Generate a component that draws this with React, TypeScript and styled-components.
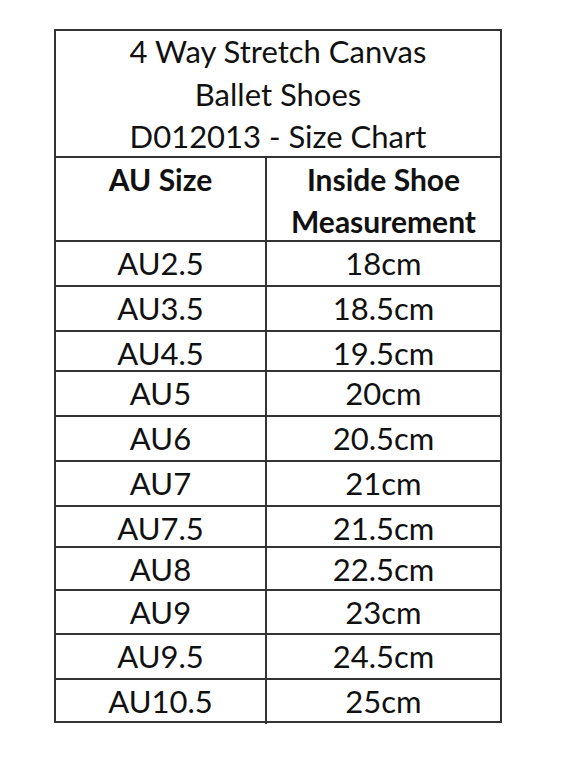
import React from 'react';
import styled, { createGlobalStyle } from 'styled-components';

const GlobalStyle = createGlobalStyle`
  html, body {
    margin: 0;
    padding: 0;
    background: #ffffff;
  }
  body {
    font-family: Lato, "Open Sans", "Liberation Sans", sans-serif;
    color: #111;
  }
`;

const Page = styled.div`
  padding: 29px 0 0 54px;
  min-height: 776px;
  box-sizing: border-box;
`;

const Chart = styled.div`
  width: 448px;
  border: 2px solid #333;
  box-sizing: border-box;
`;

const Title = styled.div`
  height: 125px;
  display: flex;
  flex-direction: column;
  justify-content: center;
  align-items: center;
  font-size: 31px;
  line-height: 42.5px;
  padding-top: 1px;
  box-sizing: border-box;
`;

const Row = styled.div<{ h: number }>`
  display: grid;
  grid-template-columns: 211px 1fr;
  height: ${({ h }) => h}px;
  border-top: 2px solid #333;
  box-sizing: border-box;
`;

const Cell = styled.div<{ bold?: boolean; top?: boolean }>`
  display: flex;
  flex-direction: column;
  align-items: center;
  justify-content: ${({ top }) => (top ? 'flex-start' : 'center')};
  font-size: ${({ bold }) => (bold ? 30 : 31)}px;
  line-height: 42px;
  font-weight: ${({ bold }) => (bold ? 700 : 400)};
  text-align: center;
  padding-bottom: 2px;
  &:first-child {
    border-right: 2px solid #333;
  }
`;

const rows: [string, string, number][] = [
  ['AU2.5', '18cm', 45],
  ['AU3.5', '18.5cm', 45],
  ['AU4.5', '19.5cm', 40],
  ['AU5', '20cm', 45],
  ['AU6', '20.5cm', 45],
  ['AU7', '21cm', 45],
  ['AU7.5', '21.5cm', 41],
  ['AU8', '22.5cm', 43],
  ['AU9', '23cm', 44],
  ['AU9.5', '24.5cm', 45],
  ['AU10.5', '25cm', 43],
];

export default function App() {
  return (
    <Page>
      <GlobalStyle />
      <Chart>
        <Title>
          <span>4 Way Stretch Canvas</span>
          <span>Ballet Shoes</span>
          <span>D012013 - Size Chart</span>
        </Title>
        <Row h={84}>
          <Cell bold top>
            AU Size
          </Cell>
          <Cell bold>
            <span>Inside Shoe</span>
            <span>Measurement</span>
          </Cell>
        </Row>
        {rows.map(([size, cm, h]) => (
          <Row key={size} h={h}>
            <Cell>{size}</Cell>
            <Cell>{cm}</Cell>
          </Row>
        ))}
      </Chart>
    </Page>
  );
}
